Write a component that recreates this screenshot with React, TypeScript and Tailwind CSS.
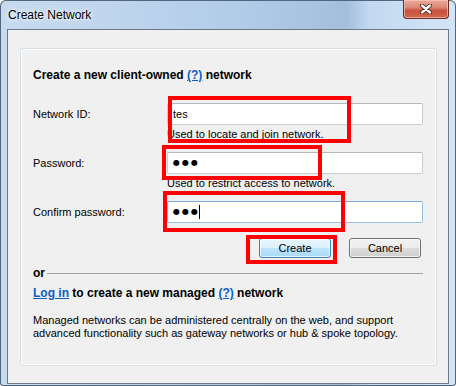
import React from "react";

const font = "font-['Liberation_Sans',Arial,sans-serif]";

function Field({ label, children }: { label: string; children: React.ReactNode }) {
  return (
    <div className="flex items-center">
      <div className="w-[134px] text-[11px] leading-[14px] text-black">{label}</div>
      {children}
    </div>
  );
}

function Helper({ text }: { text: string }) {
  return <div className="ml-[134px] mt-[2px] text-[11px] leading-[14px] text-black">{text}</div>;
}

function Dots({ caret }: { caret?: boolean }) {
  return (
    <div className="flex items-center pl-[5px]">
      <span className="font-['DejaVu_Sans',sans-serif] text-[8px] leading-[10px] tracking-[2px] text-black">●●●</span>
      {caret && <span className="-ml-[1px] h-[14px] w-px bg-black" />}
    </div>
  );
}

function CloseGlyph() {
  return (
    <svg width="14" height="10" viewBox="0 0 14 10">
      <path d="M3 1.5 L11 8.5 M11 1.5 L3 8.5" stroke="#4a2018" strokeWidth="4.2" strokeLinecap="round" />
      <path d="M3 1.5 L11 8.5 M11 1.5 L3 8.5" stroke="#ffffff" strokeWidth="2.4" strokeLinecap="round" />
    </svg>
  );
}

export default function App() {
  return (
    <div
      className={`relative flex h-[386px] w-[456px] flex-col overflow-hidden rounded-t-[6px] rounded-b-[3px] bg-[linear-gradient(90deg,#c6dbf0_0%,#c0d6ee_22%,#b0cbe7_55%,#a3bfdc_76%,#c3d9f0_81%,#d3e5f8_100%)] shadow-[inset_0_0_0_1px_#52667c] ${font}`}
    >
      {/* title bar */}
      <div className="flex h-[29px] shrink-0 items-start justify-between pl-[8px] pr-[7px]">
        <div className="mt-[7px] text-[12px] leading-[16px] text-black [text-shadow:0_0_6px_#ffffff,0_0_3px_#ffffff]">
          Create Network
        </div>
        <div className="flex h-[19px] w-[46px] items-center justify-center rounded-b-[4px] border border-t-0 border-[#6b2c22] bg-[linear-gradient(180deg,#e9a99a_0%,#dc8a78_40%,#c9503c_60%,#cf6a4f_100%)] shadow-[inset_0_0_0_1px_rgba(255,210,200,0.6)]">
          <CloseGlyph />
        </div>
      </div>

      {/* client area */}
      <div className="mx-[7px] mb-[2px] flex flex-1 flex-col border border-[#6d7884] bg-[#f0f0f0] pb-[17px] pl-[12px] pr-[11px] pt-[18px]">
        <div className="flex flex-1 flex-col rounded-[3px] border border-[#d5dfe5] pl-[12px] pr-[13px] pt-[19px] shadow-[inset_0_0_0_1px_#ffffff]">
          <div className="text-[12px] font-bold leading-[15px] text-black">
            Create a new client-owned <span className="text-[#0b5fc4] underline">(?)</span> network
          </div>

          <div className="mt-[20px]">
            <Field label="Network ID:">
              <div className="flex h-[22px] w-[256px] items-center rounded-[2px] border border-[#c9ccd1] border-t-[#b5b8bd] bg-white pl-[5px] text-[11px] text-black">
                tes
              </div>
            </Field>
            <Helper text="Used to locate and join network." />
          </div>

          <div className="mt-[11px]">
            <Field label="Password:">
              <div className="flex h-[22px] w-[256px] items-center rounded-[2px] border border-[#c9ccd1] border-t-[#b5b8bd] bg-white">
                <Dots />
              </div>
            </Field>
            <Helper text="Used to restrict access to network." />
          </div>

          <div className="mt-[11px]">
            <Field label="Confirm password:">
              <div className="flex h-[22px] w-[256px] items-center rounded-[2px] border border-[#98bfe4] border-t-[#7fa9d4] bg-white">
                <Dots caret />
              </div>
            </Field>
          </div>

          <div className="mt-[15px] flex justify-end gap-[18px] pr-[2px]">
            <div className="flex h-[20px] w-[72px] items-center justify-center rounded-[3px] border border-[#3c7fb1] bg-[linear-gradient(180deg,#eaf6fd_0%,#d9f0fc_50%,#bee6fd_50%,#a7d9f5_100%)] text-[11px] text-black shadow-[inset_0_0_0_1px_rgba(255,255,255,0.7)]">
              Create
            </div>
            <div className="flex h-[20px] w-[72px] items-center justify-center rounded-[3px] border border-[#707070] bg-[linear-gradient(180deg,#f2f2f2_0%,#ebebeb_50%,#dddddd_50%,#cfcfcf_100%)] text-[11px] text-black shadow-[inset_0_0_0_1px_rgba(255,255,255,0.7)]">
              Cancel
            </div>
          </div>

          <div className="mt-[8px] flex items-center">
            <span className="text-[12px] font-bold leading-[14px] text-black">or</span>
            <div className="ml-[2px] mt-[1px] h-px flex-1 bg-[#a0a0a0]" />
          </div>

          <div className="mt-[6px] text-[12px] font-bold leading-[15px] text-black">
            <span className="text-[#0b5fc4] underline">Log in</span> to create a new managed{" "}
            <span className="text-[#0b5fc4] underline">(?)</span> network
          </div>

          <div className="mt-[13px] text-[11px] leading-[13px] text-black">
            Managed networks can be administered centrally on the web, and support
            <br />
            advanced functionality such as gateway networks or hub &amp; spoke topology.
          </div>
        </div>
      </div>

      {/* red annotation boxes */}
      <div className="pointer-events-none absolute left-[168px] top-[96px] h-[47px] w-[183px] border-4 border-[#ff0000]" />
      <div className="pointer-events-none absolute left-[162px] top-[145px] h-[35px] w-[160px] border-4 border-[#ff0000]" />
      <div className="pointer-events-none absolute left-[163px] top-[191px] h-[41px] w-[182px] border-4 border-[#ff0000]" />
      <div className="pointer-events-none absolute left-[246px] top-[235px] h-[29px] w-[91px] border-4 border-[#ff0000]" />
    </div>
  );
}
